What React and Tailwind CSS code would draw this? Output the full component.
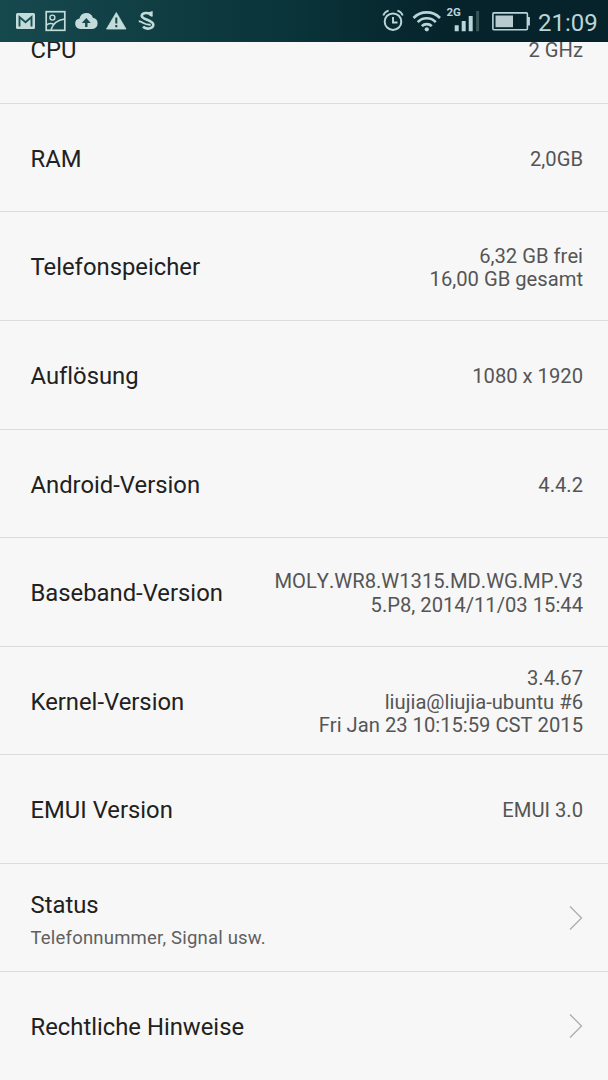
import React from 'react';

const rows = [
  { label: 'CPU', value: ['2 GHz'] },
  { label: 'RAM', value: ['2,0GB'] },
  { label: 'Telefonspeicher', value: ['6,32 GB frei', '16,00 GB gesamt'] },
  { label: 'Auflösung', value: ['1080 x 1920'] },
  { label: 'Android-Version', value: ['4.4.2'] },
  { label: 'Baseband-Version', value: ['MOLY.WR8.W1315.MD.WG.MP.V3', '5.P8, 2014/11/03 15:44'] },
  { label: 'Kernel-Version', value: ['3.4.67', 'liujia@liujia-ubuntu #6', 'Fri Jan 23 10:15:59 CST 2015'] },
  { label: 'EMUI Version', value: ['EMUI 3.0'] },
  { label: 'Status', sub: 'Telefonnummer, Signal usw.', link: true },
  { label: 'Rechtliche Hinweise', link: true },
];

function NotificationIcons() {
  return (
    <svg width="170" height="42" viewBox="0 0 170 42" fill="none">
      {/* mail */}
      <rect x="16" y="13" width="19" height="16" rx="1.5" fill="#c3dcdb" />
      <path d="M19.5 26.5V17l6 5.2 6-5.2v9.5" stroke="#1b4f53" strokeWidth="1.9" />
      {/* picture */}
      <rect x="46.2" y="11.7" width="18.6" height="18.6" stroke="#c3dcdb" strokeWidth="1.7" />
      <circle cx="52.4" cy="17.6" r="2.5" stroke="#c3dcdb" strokeWidth="1.4" />
      <path d="M51 29.8c1.6-5.2 6-9.8 13.5-10.8M46.8 24.8c2.3-1.5 5.2-1.5 7.4-.2" stroke="#c3dcdb" strokeWidth="1.6" />
      {/* cloud upload */}
      <path d="M80.3 29a5.3 5.3 0 0 1-.8-10.5 7 7 0 0 1 13.4-.8A5.7 5.7 0 0 1 92.3 29z" fill="#c3dcdb" />
      <path d="M85.1 27v-4h-3.3l4.5-5 4.5 5h-3.3v4z" fill="#184b50" />
      {/* warning */}
      <path d="M116.3 12.5 126 29h-19.5z" fill="#c3dcdb" stroke="#c3dcdb" strokeWidth="0.8" strokeLinejoin="round" />
      <path d="M116.3 17.5v6M116.3 25v2.2" stroke="#144448" strokeWidth="2" />
      {/* S mark */}
      <path d="M151 16.2c.3-4.2-8.8-4.3-9.3-.6-.5 3.8 11.6 4.6 11.6 9 0 4.6-7.3 5-10.3 2.2" stroke="#c3dcdb" strokeWidth="2.6" />
      <path d="M138.8 21.3c3.6-.2 5.5 4.2 12 3.3M148.8 13.2l2.9-.9v4.2" stroke="#c3dcdb" strokeWidth="1.9" />
    </svg>
  );
}

function SystemIcons() {
  return (
    <svg width="154" height="42" viewBox="380 0 154 42" fill="none">
      {/* alarm */}
      <circle cx="393" cy="21.7" r="8.3" stroke="#b8d5d9" strokeWidth="2" />
      <path d="M393 17v5.5h4.5" stroke="#b8d5d9" strokeWidth="1.9" />
      <path d="M383.3 15.5c.8-2.3 2.9-4.1 5.3-4.8M402.7 15.5c-.8-2.3-2.9-4.1-5.3-4.8" stroke="#b8d5d9" strokeWidth="1.8" />
      {/* wifi */}
      <path d="M413.5 18a18.5 18.5 0 0 1 26.5 0M417.7 22.2a12.5 12.5 0 0 1 18.1 0M421.8 26.2a7 7 0 0 1 10 0" stroke="#b8d5d9" strokeWidth="2.6" />
      <circle cx="426.8" cy="29.3" r="2.1" fill="#b8d5d9" />
      {/* signal */}
      <text x="446.5" y="15.9" fill="#b8d5d9" className="font-['Roboto',sans-serif] text-[11.5px] font-bold">2G</text>
      <path d="M456.7 31.3v-6M463.7 31.3V21M470.7 31.3V16" stroke="#b8d5d9" strokeWidth="4" />
      <path d="M477.6 31.3V11" stroke="#385459" strokeWidth="3" />
      {/* battery */}
      <rect x="492.9" y="12.9" width="34.5" height="16.8" rx="1" stroke="#b8d5d9" strokeWidth="1.6" />
      <path d="M495.5 15.5H513v11.7h-17.5z" fill="#b8cccf" />
      <path d="M528.8 17v8.5" stroke="#b8d5d9" strokeWidth="2.2" />
    </svg>
  );
}

function StatusBar() {
  return (
    <header className="flex h-[42px] items-center justify-between bg-linear-to-r from-[#16494e] from-0% via-[#093338] via-50% to-[#06222a] to-75%">
      <NotificationIcons />
      <div className="flex items-center">
        <SystemIcons />
        <span className="w-[74px] whitespace-nowrap pl-1 pt-[3px] text-[24px] leading-[30px] text-[#b8d5d9]">21:09</span>
      </div>
    </header>
  );
}

function Chevron() {
  return (
    <svg width="14" height="26" viewBox="0 0 14 26" fill="none" className="shrink-0">
      <path d="M1 1.5 12.5 13 1 24.5" stroke="#adadad" strokeWidth="1.3" />
    </svg>
  );
}

function Row({ label, value, sub, link }) {
  return (
    <li className="flex h-[108.55px] items-center justify-between border-b border-[#dcdcdc] pl-[30.5px] pr-[25px]">
      <div className={`whitespace-nowrap ${sub ? 'pt-[5px]' : 'pt-[2.5px]'}`}>
        <div className="text-[23.8px] leading-[30px] tracking-[0.01px] text-[#212121]">{label}</div>
        {sub && <div className="mt-[5px] text-[18.5px] leading-[26px] tracking-[0.2px] text-[#606060]">{sub}</div>}
      </div>
      {value && (
        <div className="whitespace-nowrap pt-[4.4px] text-right text-[20.2px] leading-[23.7px] text-[#555] [font-kerning:none]">
          {value.map(line => <div key={line}>{line}</div>)}
        </div>
      )}
      {link && <Chevron />}
    </li>
  );
}

export default function App() {
  return (
    <div className="flex h-[1080px] w-[608px] flex-col overflow-hidden bg-[#f7f7f7] font-['Roboto',sans-serif]">
      <StatusBar />
      <main className="flex-1 overflow-hidden">
        {/* list is scrolled, so the first row is cut by the status bar */}
        <ul className="-mt-[46.65px]">
          {rows.map(r => <Row key={r.label} {...r} />)}
        </ul>
      </main>
    </div>
  );
}
